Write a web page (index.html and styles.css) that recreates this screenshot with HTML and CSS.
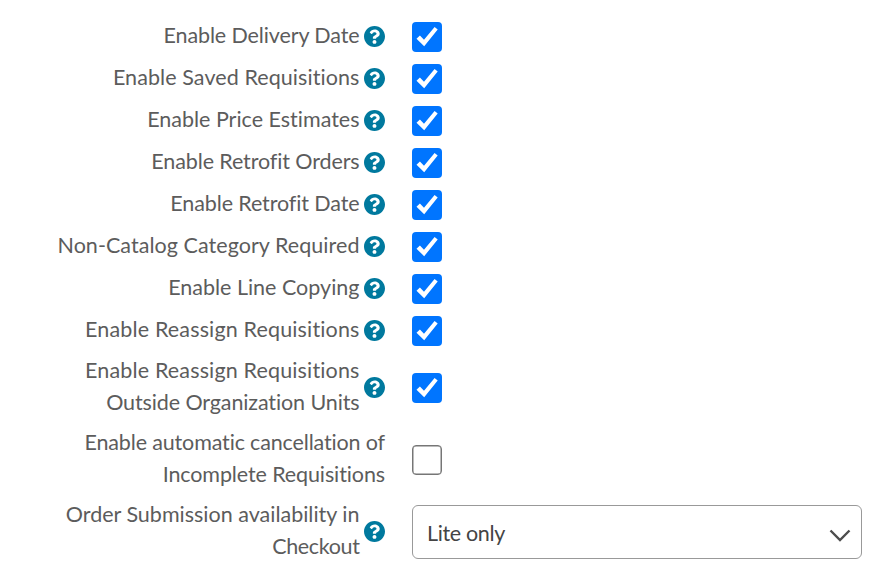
FILE: index.html
```html
<!DOCTYPE html>
<html lang="en">
<head>
<meta charset="utf-8">
<title>Requisition settings</title>
<link rel="stylesheet" href="styles.css">
</head>
<body>
<svg width="0" height="0" class="defs" aria-hidden="true">
  <symbol id="help" viewBox="8 8 496 496"><path d="M504 256c0 137-111 248-248 248S8 393 8 256C8 119.100 119 8 256 8s248 111.100 248 248zM262.700 90c-54.500 0-89.300 23-116.500 63.800-3.500 5.300-2.400 12.400 2.700 16.300l34.700 26.300c5.200 3.900 12.600 3 16.700-2.100 17.900-22.700 30.100-35.800 57.300-35.800 20.400 0 45.700 13.100 45.700 33 0 15-12.400 22.700-32.500 34C247.100 238.500 216 254.900 216 296v4c0 6.600 5.400 12 12 12h56c6.600 0 12-5.400 12-12v-1.300c0-28.500 83.200-29.600 83.200-106.700 0-58-60.200-102-116.500-102zM256 338c-25.400 0-46 20.600-46 46s20.600 46 46 46 46-20.600 46-46-20.600-46-46-46z"/></symbol>
  <symbol id="check" viewBox="0 0 30 30"><path d="M4.500 16.700 7.900 13.400 12 17.700 22.600 5 25.700 7.400 12.200 24.200Z"/></symbol>
</svg>
<form class="settings">
  <div class="row"><div class="label"><span class="tight">Enable Delivery Date</span><svg class="help"><use href="#help"/></svg></div><div class="box on"><svg><use href="#check"/></svg></div></div>
  <div class="row"><div class="label"><span class="loose">Enable Saved Requisitions</span><svg class="help"><use href="#help"/></svg></div><div class="box on"><svg><use href="#check"/></svg></div></div>
  <div class="row"><div class="label"><span>Enable Price Estimates</span><svg class="help"><use href="#help"/></svg></div><div class="box on"><svg><use href="#check"/></svg></div></div>
  <div class="row"><div class="label"><span class="tight">Enable Retrofit Orders</span><svg class="help"><use href="#help"/></svg></div><div class="box on"><svg><use href="#check"/></svg></div></div>
  <div class="row"><div class="label"><span class="tight">Enable Retrofit Date</span><svg class="help"><use href="#help"/></svg></div><div class="box on"><svg><use href="#check"/></svg></div></div>
  <div class="row"><div class="label"><span class="wide">Non-Catalog Category Required</span><svg class="help"><use href="#help"/></svg></div><div class="box on"><svg><use href="#check"/></svg></div></div>
  <div class="row"><div class="label"><span>Enable Line Copying</span><svg class="help"><use href="#help"/></svg></div><div class="box on"><svg><use href="#check"/></svg></div></div>
  <div class="row"><div class="label"><span class="looser">Enable Reassign Requisitions</span><svg class="help"><use href="#help"/></svg></div><div class="box on"><svg><use href="#check"/></svg></div></div>
  <div class="row"><div class="label"><span><span class="looser">Enable Reassign Requisitions</span><br><span class="tight">Outside Organization Units</span></span><svg class="help"><use href="#help"/></svg></div><div class="box on"><svg><use href="#check"/></svg></div></div>
  <div class="row"><div class="label"><span><span class="tighter">Enable automatic cancellation of</span><br><span class="tight">Incomplete Requisitions</span></span></div><div class="box"></div></div>
  <div class="row"><div class="label"><span>Order Submission availability in<br><span class="tightest">Checkout</span></span><svg class="help"><use href="#help"/></svg></div><div class="select"><span class="tightest">Lite only</span><svg class="chevron" viewBox="0 0 22 14"><path d="M1.500 1.500 11 11 20.500 1.500"/></svg></div></div>
</form>
</body>
</html>
```
FILE: styles.css
```css
* { box-sizing: border-box; }
body { margin: 0; background: #fff; color: #5c5c5c; font: 21.5px/32px Lato, sans-serif; font-variant-ligatures: none; }
.defs { position: absolute; }
.settings { display: flex; flex-direction: column; gap: 8px; padding-top: 19px; }
.row { display: grid; grid-template-columns: 385px 450px; column-gap: 27px; align-items: center; min-height: 34px; }
.label { display: flex; justify-content: flex-end; align-items: center; gap: 4.500px; text-align: right; white-space: nowrap; }
.label > span { margin: -1px 0 1px; }
.loose { letter-spacing: .08px; }
.looser { letter-spacing: .15px; }
.wide { letter-spacing: .05px; }
.tight { letter-spacing: -.11px; }
.tighter { letter-spacing: -.15px; }
.tightest { letter-spacing: -.35px; }
.help { width: 21px; height: 21px; fill: #00799e; flex: none; }
.box { width: 30px; height: 30px; margin-top: 2px; border: 1.500px solid #767676; box-shadow: inset 0 0 0 .5px #767676; border-radius: 4px; }
.box.on { border: 0; box-shadow: none; background: #0075ff; }
.box svg { display: block; width: 30px; height: 30px; fill: #fff; }
.select { display: flex; align-items: center; justify-content: space-between; height: 54px; margin: -10px 0 -12px; border: 1px solid #999; border-radius: 6px; padding: 1px 10px 0 14px; color: #444; }
.chevron { width: 22px; height: 14px; margin-top: 6px; fill: none; stroke: #4d4d4d; stroke-width: 2.400; }
```
